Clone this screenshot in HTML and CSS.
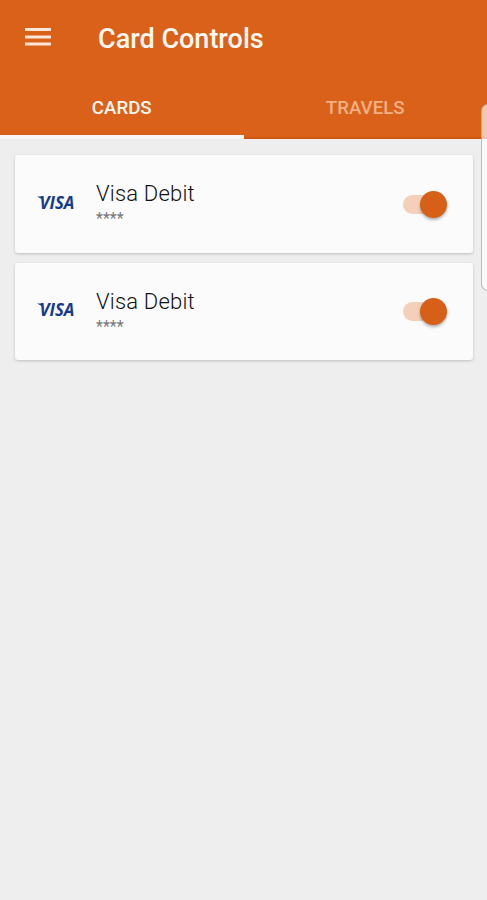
FILE: index.html
```html
<!DOCTYPE html>
<html lang="en">
<head>
    <meta charset="UTF-8">
    <meta name="viewport" content="width=device-width, initial-scale=1.0">
    <title>Card Controls</title>

    <link rel="stylesheet" href="styles.css">
</head>
<body>
    <header class="app-header">
        <div class="toolbar">
            <button type="button" class="menu-button" aria-label="Menu">
                <svg width="26" height="20" viewBox="0 0 26 20">
                    <path d="M0 2.5h26M0 9.9h26M0 17.1h26" stroke="#fbe6da" stroke-width="3"/>
                </svg>
            </button>
            <h1>Card Controls</h1>
        </div>
        <nav class="tabs">
            <a class="tab active">CARDS</a>
            <a class="tab">TRAVELS</a>
        </nav>
    </header>

    <main class="card-list">
        <div class="card">
            <svg class="visa-logo" width="38" height="24" viewBox="0 0 38 24">
                <path d="M0 5.6h5.2L7 11Q4.500 7.200 0 5.600z" fill="#173a8c"/>
                <text x="2.500" y="17.500" textLength="35" lengthAdjust="spacingAndGlyphs">VISA</text>
            </svg>
            <div class="card-info">
                <h2>Visa Debit</h2>
                <p>****</p>
            </div>
            <label class="switch">
                <input type="checkbox" checked>
                <span class="track"></span>
                <span class="thumb"></span>
            </label>
        </div>

        <div class="card">
            <svg class="visa-logo" width="38" height="24" viewBox="0 0 38 24">
                <path d="M0 5.6h5.2L7 11Q4.500 7.200 0 5.600z" fill="#173a8c"/>
                <text x="2.500" y="17.500" textLength="35" lengthAdjust="spacingAndGlyphs">VISA</text>
            </svg>
            <div class="card-info">
                <h2>Visa Debit</h2>
                <p>****</p>
            </div>
            <label class="switch">
                <input type="checkbox" checked>
                <span class="track"></span>
                <span class="thumb"></span>
            </label>
        </div>
    </main>

    <div class="edge-handle"></div>
</body>
</html>
```
FILE: styles.css
```css
/* Reset & Base Styles */
* {
    box-sizing: border-box;
    margin: 0;
    padding: 0;
    font-family: Roboto, "Liberation Sans", sans-serif;
}

body {
    position: relative;
    height: 900px;
    background-color: #eeeeee;
    overflow: hidden;
}

/* Header */
.app-header {
    height: 139px;
    background-color: #d96119;
    color: #fff7f2;
}

.toolbar {
    display: flex;
    align-items: center;
    height: 76px;
    padding-left: 25px;
}

.menu-button {
    display: flex;
    width: 26px;
    margin-right: 47px;
    margin-top: -2px;
    background: none;
    border: none;
}

h1 {
    padding-top: 2px;
    font-size: 27px;
    font-weight: 500;
    letter-spacing: 0;
}

/* Tabs */
.tabs {
    display: flex;
    height: 63px;
}

.tab {
    flex: 1;
    padding-top: 21px;
    font-size: 18.7px;
    font-weight: 500;
    line-height: 23px;
    text-align: center;
    color: #f3b084;
    border-bottom: 2px solid #d05510;
}

.tab.active {
    color: #fff7f2;
    border-bottom: 4px solid #f7f7f7;
}

/* Cards */
.card-list {
    display: flex;
    flex-direction: column;
    gap: 10px;
    padding: 16px 14px 0 15px;
}

.card {
    display: flex;
    align-items: center;
    height: 97.5px;
    padding: 0 26px 0 22px;
    background-color: #fbfbfb;
    border-radius: 3px;
    box-shadow: 0 1px 3px rgba(0, 0, 0, 0.2);
}

.visa-logo {
    margin-right: 21px;
    margin-bottom: 2px;
}

.visa-logo text {
    font-family: "Open Sans", sans-serif;
    font-size: 17px;
    font-weight: 700;
    font-style: italic;
    fill: #173a8c;
}

.card-info {
    flex: 1;
    padding-top: 3px;
}

h2 {
    font-size: 22px;
    font-weight: 300;
    line-height: 26px;
    letter-spacing: 0.2px;
    color: #111;
}

.card-info p {
    padding-top: 2px;
    font-size: 16px;
    line-height: 20px;
    color: #777;
}

/* Switch */
.switch {
    position: relative;
    display: flex;
    align-items: center;
    width: 44px;
    height: 28px;
    margin-top: 1px;
}

.switch input {
    display: none;
}

.track {
    width: 36px;
    height: 19px;
    border-radius: 10px;
    background-color: #f4d0bb;
}

.thumb {
    position: absolute;
    right: 0;
    width: 27px;
    height: 27px;
    border-radius: 50%;
    background-color: #d66018;
    box-shadow: 0 2px 3px rgba(0, 0, 0, 0.3);
}

/* Panel handle peeking in from the right edge of the screen */
.edge-handle {
    position: absolute;
    top: 104px;
    right: -8px;
    width: 14px;
    height: 187px;
    background-color: rgba(255, 255, 255, 0.65);
    border: 1px solid rgba(150, 150, 150, 0.6);
    border-radius: 7px;
}
```
